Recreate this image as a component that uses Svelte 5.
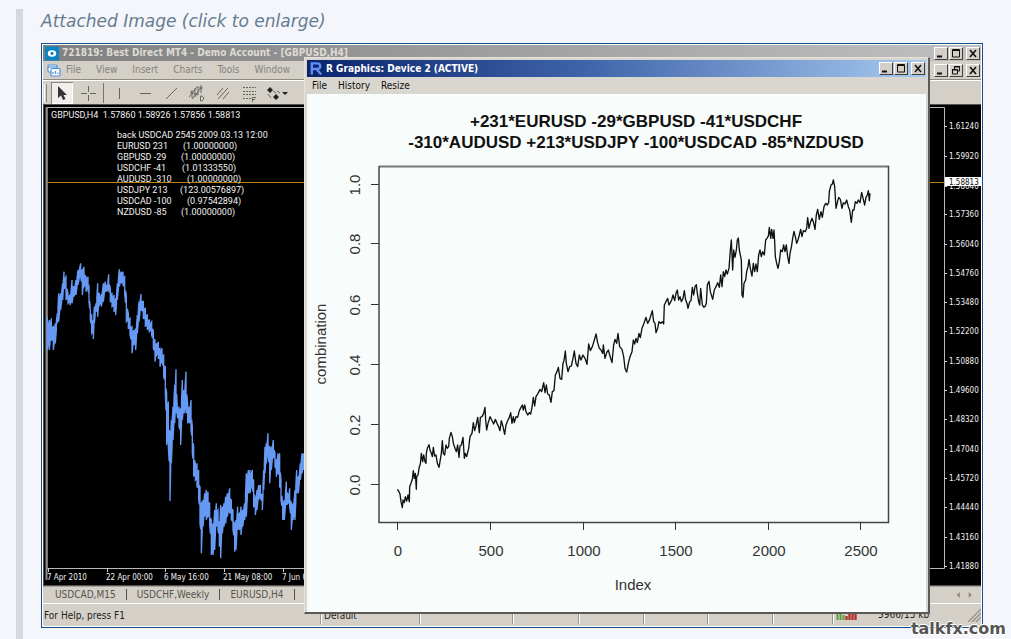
<script>
  const menus = ['File', 'View', 'Insert', 'Charts', 'Tools', 'Window', 'Help'];
  const rMenus = ['File', 'History', 'Resize'];
  const tabs = ['USDCAD,M15', 'USDCHF,Weekly', 'EURUSD,H4', 'GBPUSD,H4'];

  const comments = [
    ['back USDCAD 2545 2009.03.13 12:00', '', 0],
    ['EURUSD 231', '(1.00000000)', 183],
    ['GBPUSD -29', '(1.00000000)', 181],
    ['USDCHF -41', '(1.01333550)', 182],
    ['AUDUSD -310', '(1.00000000)', 187],
    ['USDJPY 213', '(123.00576897)', 180],
    ['USDCAD -100', '(0.97542894)', 187],
    ['NZDUSD -85', '(1.00000000)', 181]
  ];

  const prices = [
    ['1.61240', 126], ['1.59920', 156], ['1.58640', 186], ['1.57360', 214], ['1.56040', 244],
    ['1.54760', 273], ['1.53480', 302], ['1.52200', 331], ['1.50880', 361], ['1.49600', 390],
    ['1.48320', 419], ['1.47040', 449], ['1.45720', 478], ['1.44440', 507], ['1.43160', 537],
    ['1.41880', 566]
  ];

  const dates = [
    ['7 Apr 2010', 47], ['22 Apr 00:00', 106], ['6 May 16:00', 164],
    ['21 May 08:00', 223], ['7 Jun 00:00', 282]
  ];

  const xTicks = [[0, 398], [500, 491], [1000, 584], [1500, 676], [2000, 769], [2500, 861]];
  const yTicks = [['1.0', 185], ['0.8', 244], ['0.6', 305], ['0.4', 365], ['0.2', 425], ['0.0', 485]];

  // x:high:low in thirds of a pixel
  const ranges = `22:230:330 28:240:330 34:235:300 40:260:330 46:250:310 52:220:250 56:160:245 62:160:210
    68:130:180 72:95:140 78:110:180 84:160:190 90:165:195 96:120:190 102:140:170 108:120:165 114:90:135
    122:70:110 127:90:165 132:80:140 138:110:155 144:110:150 147:140:185 151:210:240 155:225:280 160:240:297
    163:200:250 168:190:215 173:130:230 178:160:195 184:165:200 190:130:185 196:125:155 201:135:155
    206:103:150 211:145:185 216:160:200 222:165:215 227:175:225 232:130:180 238:88:140 244:95:130 249:95:135
    254:110:160 259:165:245 265:220:265 270:235:285 276:260:340 282:270:315 287:265:330 292:225:280
    297:185:245 303:162:210 310:185:235 316:205:260 322:225:270 328:240:275 335:245:285 340:270:325
    345:300:365 350:310:345 355:305:355 360:325:380 366:325:365 371:345:410 376:380:460 380:460:615
    385:485:620 390:580:783 394:540:670 399:500:600 404:435:550 408:388:520 412:500:530 417:500:560
    422:505:615 427:420:540 432:450:520 438:395:520 443:490:550 448:500:550 453:480:570 457:560:640
    461:620:710 466:670:720 471:670:740 476:690:780 480:740:850 484:790:940 489:780:860 494:760:830
    499:750:840 504:755:830 509:790:855 514:840:945 519:850:945 524:810:930 529:790:860 534:810:870
    538:850:920 542:795:955 547:800:880 552:790:860 557:770:850 562:760:830 569:745:820 574:780:840
    579:810:870 584:850:935 588:840:930 593:800:870 598:820:870 603:800:885 608:810:860 614:790:840
    619:700:830 625:690:760 630:690:760 637:690:740 641:720:800 646:780:825 651:750:810 656:735:780
    661:735:770 667:770:810 671:690:750 675:620:700 679:610:670 684:580:640 689:620:730 694:620:690
    700:600:650 705:640:680 709:660:710 714:640:700 719:640:740 723:720:780 728:790:840 733:780:840
    739:725:795 744:770:790 749:745:800 754:790:870 759:790:840 765:750:840 770:690:760 775:710:760
    781:670:720 786:640:700 791:640:690`
    .trim()
    .split(/\s+/)
    .map((bar) => bar.split(':').map(Number));

  const bluePoints = ranges
    .flatMap(([x, hi, lo], i) => {
      const [nx, nhi, nlo] = ranges[i + 1] ?? ranges[i];
      const mx = (x + nx) / 2;
      const top = (hi + nhi) / 2;
      const low = (lo + nlo) / 2;
      const inset = (low - top) * 0.22;
      return [[x, hi], [x, lo], [mx, low - inset], [mx, top + inset]];
    })
    .map((p) => p.join(','))
    .join(' ');

  const comboStart = `52,508 57,515 60,522 63,545 67,563 69,540 73,548 76,530 80,543 84,525 88,545 89,500 93,490 97,478
    100,452 103,475 106,460 109,508 110,470 114,465 118,440 121,432 124,400 128,425 131,405 135,425 138,430
    139,400 142,385 147,374 150,390 154,400 157,410 160,382 164,408 168,405 172,430 177,442 180,425 184,400
    187,362 190,400 194,405 198,375 202,385 206,380 208,355 213,337 217,350 220,370 225,385 229,395 233,375
    237,412 240,378 244,375 249,352 253,415 256,400 260,410 266,385 270,350 276,340 280,308 284,332 288,318
    293,292 298,338 301,292 306,290 311,280 315,262 317,300 320,330 324,310 330,290 335,300 341,312 346,298
    351,310 356,320 360,332 364,302 369,320 374,343 378,315 384,300 388,292 392,278 396,310 400,290 403,308
    408,290 413,292 418,272 423,262 427,255 430,270 434,255 438,275 443,285 448,278 452,282 456,262 460,232
    464,258 468,230 474,220 480,208 485,215 491,188 495,218 499,195 503,222 508,225 513,247 517,215 522,212
    526,165 531,155 535,142 540,175 545,178 549,130 552,122 556,93 559,130 564,155 569,140 574,138 579,115
    583,93 588,130 593,140 598,105 603,120 609,105 615,115 621,133 626,72 631,92 637,80 643,60 648,42
    653,68 658,85 663,90 668,100 670,75 675,115 680,98 685,90 690,108 696,128 701,75 705,58 710,70 714,40
    719,80 726,88 731,110 735,145 740,157`;

  const comboEnd = `20,637 25,610 30,590 36,575 40,540 44,552 48,535 52,548 57,520 61,533 66,505 72,490 78,472 83,490
    89,478 93,465 97,452 101,485 105,490 108,518 113,505 117,485 122,490 127,485 131,492 133,435 138,425
    143,415 147,435 151,428 155,420 159,405 164,422 168,400 172,390 176,420 180,410 184,425 189,415 193,392
    197,420 201,430 204,445 209,425 213,422 217,382 221,405 225,380 229,374 232,400 236,425 239,435 242,385
    247,435 252,442 256,438 259,430 262,375 267,364 271,395 278,418 283,390 288,380 293,368 298,382 302,345
    306,380 310,335 314,350 318,330 322,342 327,325 331,270 334,240 338,330 341,270 345,292 349,270 352,240
    355,234 358,270 362,290 364,300 366,405 369,412 372,370 377,360 380,335 384,320 387,298 391,325 396,348
    400,310 404,335 408,312 412,335 416,285 420,270 424,290 428,275 433,285 437,240 441,235 445,228 448,202
    452,235 455,208 459,235 462,210 464,245 466,290 470,310 474,325 478,305 482,270 487,275 491,255 495,275
    499,255 503,290 507,310 510,280 514,262 518,235 522,214 526,230 530,250 534,240 538,225 542,208 546,230
    550,212 556,215 560,205 563,173 567,205 572,185 576,175 580,185 585,208 589,165 593,148 598,178 603,155
    607,172 612,140 617,130 622,135 626,128 628,95 633,75 637,72 640,60 644,80 648,145 652,128 656,112
    661,118 666,145 670,128 675,132 680,120 685,140 689,150 694,187 698,150 702,150 706,125 711,130 715,120
    720,128 725,97 730,118 734,135 738,112 742,105 745,92 748,122 750,100`;
</script>

{#snippet controls(kind)}
  <div class="controls">
    <button aria-label="Minimize"><svg viewBox="0 0 10 9"><path d="M1 7.500H6" stroke-width="2" /></svg></button>
    <button aria-label={kind === 'restore' ? 'Restore' : 'Maximize'}>
      {#if kind === 'restore'}
        <svg viewBox="0 0 10 9"><path d="M3.500 3V.5H8.500V5H6.500M3 1H9M1.500 3.500H6.500V8H1.500ZM1 4H7" /></svg>
      {:else}
        <svg viewBox="0 0 10 9"><path d="M1.500 .5H8.500V8H1.500ZM1 1.500H9" /></svg>
      {/if}
    </button>
    <button class="close" aria-label="Close"><svg viewBox="0 0 10 9"><path d="M2 1L8 8M8 1L2 8" stroke-width="1.600" /></svg></button>
  </div>
{/snippet}

<main>
  <figure>
    <figcaption>Attached Image (click to enlarge)</figcaption>
    <div class="frame">
      <section class="terminal">
        <header class="title">
          <svg class="app" viewBox="0 0 15 15">
            <rect width="15" height="15" fill="#0b84c4" />
            <ellipse cx="7.500" cy="7.500" rx="4.500" ry="3.500" fill="#fff" />
            <circle cx="7.500" cy="7.500" r="1.500" fill="#0b6fae" />
          </svg>
          <h1>721819: Best Direct MT4 - Demo Account - [GBPUSD,H4]</h1>
          {@render controls('max')}
        </header>
        <nav class="menu">
          <svg class="doc" viewBox="0 0 14 13" fill="#fff" stroke="#4f8fe0" stroke-width="1.200">
            <rect x="1" y="1" width="9" height="7" rx="1" /><path d="M1 3H10" />
            <rect x="4" y="4.500" width="9" height="7.500" rx="1" /><path d="M6 10V8M8.500 10V7M11 10V8.500" />
          </svg>
          {#each menus as m}<button>{m}</button>{/each}
          {@render controls('restore')}
        </nav>
        <div class="tools">
          <span class="handle"></span>
          <button class="on" aria-label="Cursor"><svg viewBox="0 0 18 18"><path d="M5 2V14L8 11.500L10 16L12.500 15L10.500 11H14Z" fill="#333" stroke="none" /></svg></button>
          <button aria-label="Crosshair"><svg viewBox="0 0 18 18"><path d="M9.500 2V8M9.500 11V17M2 9.500H8M11 9.500H17" /></svg></button>
          <span class="sep"></span>
          <button aria-label="Vertical line"><svg viewBox="0 0 18 18"><path d="M9.500 4V15" /></svg></button>
          <button aria-label="Horizontal line"><svg viewBox="0 0 18 18"><path d="M4 9.500H15" /></svg></button>
          <button aria-label="Trendline"><svg viewBox="0 0 18 18"><path d="M4 15L15 4" /></svg></button>
          <button aria-label="Equidistant channel"><svg viewBox="0 0 18 18"><path d="M1 13L9 3M4 15L14 3M2 8L10 11M4 6V14M7 4V13M10 2V11M13 1V9M11 4H15" /><path d="M12.500 12V17H14L15.500 15.500V13.500L14 12Z" /></svg></button>
          <button aria-label="Channel"><svg viewBox="0 0 18 18"><path d="M3 11L9 4M4 15L14 4M9 15L15 8" /></svg></button>
          <button aria-label="Fibonacci"><svg viewBox="0 0 18 18"><path d="M3 3.500H16M3 7.500H16M3 10.500H16M3 14.500H11" stroke-dasharray="2 1" /><path d="M12.500 18V13.500H16M12 15.500H15" /></svg></button>
          <button aria-label="Arrows"><svg class="wide" viewBox="0 0 24 18"><path d="M3 6L6 3L9 6L6 9ZM9 13L12 10L15 13L12 16ZM18 8H24L21 11Z" fill="#222" stroke="none" /><path d="M4 10L7 14M9 7L12 9M13 7L16 9" /></svg></button>
        </div>

        <svg class="chart" viewBox="43 104 938 481">
          <rect x="43" y="104" width="938" height="481" fill="#000" />
          <path d="M43.500 585V104.500H981" stroke="#55554f" fill="none" />
          <path d="M47 568V107.500H944.500V568.500H47" stroke="#b8b8b8" fill="none" />
          <path d="M46.500 107V580" stroke="#8c8c86" stroke-width="2" />
          <path d="M47 182.500H944" stroke="#b8801c" />
          <g class="notes">
            <text x="51" y="118" xml:space="preserve">GBPUSD,H4  1.57860 1.58926 1.57856 1.58813</text>
            {#each comments as [label, value, x], i}
              <text x="117" y={138 + i * 11}>{label}</text>
              {#if value}<text {x} y={138 + i * 11}>{value}</text>{/if}
            {/each}
          </g>
          <g class="axis">
            {#each prices as [p, y]}
              <path d="M944 {y}.5h3" stroke="#ccc" />
              <text x="949" y={y + 3}>{p}</text>
            {/each}
            <rect x="945" y="177" width="36" height="9" fill="#fff" />
            <text class="dark" x="949" y="185">1.58813</text>
            {#each dates as [d, x]}
              <path d="M{x + 1}.5 568v4" stroke="#ccc" />
              <text {x} y="580">{d}</text>
            {/each}
          </g>
          <g transform="translate(40 240) scale(.33333)">
            <polyline points={bluePoints} fill="none" stroke="#6699f4" stroke-width="4" />
          </g>
        </svg>

        <nav class="tabs">
          {#each tabs as t}<button>{t}</button>{/each}
          <svg viewBox="0 0 24 8"><path d="M5 0V8L1 4ZM17 0V8L21 4Z" fill="#8a8680" /></svg>
        </nav>
        <footer class="status">
          <span>For Help, press F1</span>
          <span>Default</span>
          <span></span><span></span><span></span><span></span><span></span><span></span>
          <span class="net">
            <svg class="signal" viewBox="0 0 22 9">
              <path d="M1.500 9V1M4.500 9V2M7.500 9V4" stroke="#5f9a3c" stroke-width="2" />
              <path d="M10.500 9V5M13.500 9V3M16.500 9V2M19.500 9V1" stroke="#b5342c" stroke-width="2.400" />
            </svg>
            5966/13 kb
            <svg class="grip" viewBox="0 0 13 13"><path d="M0 13L13 0M4 13L13 4M8 13L13 8" stroke="#8a8680" stroke-width="1.200" /></svg>
          </span>
        </footer>
      </section>

      <section class="device">
        <header class="title">
          <svg class="app" viewBox="0 0 15 15"><path d="M3 14V2H9Q12 2 12 5Q12 8 9 8H4M8 8L13 14" fill="none" stroke="#5f8df5" stroke-width="2.600" /></svg>
          <h2>R Graphics: Device 2 (ACTIVE)</h2>
          {@render controls('max')}
        </header>
        <nav class="menu">
          {#each rMenus as m}<button>{m}</button>{/each}
        </nav>
        <svg class="plot" viewBox="307 94 619 518">
          <g class="heading">
            <text x="636" y="127">+231*EURUSD -29*GBPUSD -41*USDCHF</text>
            <text x="636" y="148">-310*AUDUSD +213*USDJPY -100*USDCAD -85*NZDUSD</text>
          </g>
          <path d="M379 166.500H889" stroke="#777" stroke-width="2" />
          <path d="M379 166V522.500H888.500V166" stroke="#444" stroke-width="1.500" fill="none" />
          <g class="labels">
            {#each xTicks as [label, x]}
              <path d="M{x - 0.5} 522v8" stroke="#333" />
              <text x={x} y="556">{label}</text>
            {/each}
            {#each yTicks as [label, y]}
              <path d="M371 {y - 0.5}h8" stroke="#333" />
              <text transform="translate(360 {y}) rotate(-90)">{label}</text>
            {/each}
            <text x="633" y="590">Index</text>
            <text transform="translate(326 344) rotate(-90)">combination</text>
          </g>
          <g fill="none" stroke="#111" stroke-width="4" stroke-linejoin="round">
            <polyline points={comboStart} transform="translate(380 320) scale(.33333)" />
            <polyline points={comboEnd} transform="translate(620 160) scale(.33333)" />
          </g>
        </svg>
      </section>
    </div>
    <span class="mark">talkfx.com</span>
  </figure>
</main>

<style>
  :global(body) {
    margin: 0;
    background: #f4f6fb;
  }
  main {
    padding: 9px 0 0 16px;
  }
  figure {
    position: relative;
    margin: 0;
    padding: 0 28px 11px 18px;
    border-left: 7px solid #d3d8e1;
  }
  figcaption {
    height: 34px;
    font: italic 17px/24px Verdana, 'DejaVu Sans', sans-serif;
    color: #667c90;
  }
  .frame {
    position: relative;
    padding: 1px;
    border: 1px solid #14508f;
    background: #fff;
    font: 10px/12px 'DejaVu Sans Condensed', 'DejaVu Sans', sans-serif;
    color: #222;
  }
  svg {
    display: block;
  }
  button {
    font: inherit;
    color: inherit;
    background: none;
    border: 0;
    padding: 0;
    white-space: nowrap;
  }
  .terminal {
    background: #d4d0c8;
    overflow: hidden;
  }
  .title {
    display: flex;
    align-items: center;
    gap: 3px;
    height: 16px;
    padding: 0 1px 0 2px;
    background: linear-gradient(90deg, #808080, #c0c0c0);
    color: #dedbd4;
  }
  h1,
  h2 {
    margin: 0;
    font: bold 10px/14px 'DejaVu Sans Condensed', 'DejaVu Sans', sans-serif;
    white-space: nowrap;
  }
  .app {
    width: 14px;
    height: 15px;
  }
  .controls {
    display: flex;
    gap: 1px;
    margin-left: auto;
  }
  .controls button {
    display: grid;
    place-items: center;
    width: 14px;
    height: 13px;
    background: #d4d0c8;
    border: 1px solid;
    border-color: #fff #404040 #404040 #fff;
    box-sizing: border-box;
  }
  .controls .close {
    margin-left: 2px;
  }
  .controls svg {
    width: 10px;
    height: 9px;
    fill: none;
    stroke: #111;
  }
  .menu {
    display: flex;
    align-items: center;
    gap: 15px;
    height: 18px;
    padding: 0 1px 0 5px;
  }
  .terminal .menu {
    padding-left: 4px;
    color: #85827c;
    border-bottom: 1px solid #8e8b85;
  }
  .doc {
    width: 14px;
    height: 13px;
    margin-right: -10px;
  }
  .tools {
    display: flex;
    align-items: center;
    gap: 4px;
    height: 23px;
    padding: 0 1px;
    border-top: 1px solid #fff;
  }
  .tools button {
    display: grid;
    place-items: center;
    width: 22px;
    height: 22px;
  }
  .tools .on {
    background: #f1efeb;
    box-shadow: inset 1px 1px #8a8780, inset -1px -1px #fff;
  }
  .tools svg {
    width: 18px;
    height: 18px;
    fill: none;
    stroke: #66645f;
  }
  .tools .wide {
    width: 24px;
  }
  .handle {
    width: 1px;
    height: 18px;
    border-left: 1px solid #fff;
    border-right: 1px solid #8a8780;
  }
  .sep {
    width: 1px;
    height: 20px;
    background: #77746e;
  }
  .chart,
  .plot {
    width: 100%;
    height: auto;
  }
  .notes {
    font: 9px Roboto, sans-serif;
    fill: #f2f2f2;
  }
  .axis {
    font-size: 8px;
    fill: #f2f2f2;
  }
  .dark {
    fill: #111;
  }
  .tabs {
    display: flex;
    align-items: center;
    height: 17px;
    padding-left: 2px;
    border-top: 1px solid #55524d;
    border-bottom: 1px solid #fff;
    box-shadow: inset 0 1px #a5a29b;
    color: #55534f;
  }
  .tabs button {
    padding: 0 10px;
    border-right: 1px solid #55534f;
    line-height: 11px;
  }
  .tabs svg {
    width: 24px;
    height: 6px;
    margin-left: auto;
    margin-right: 4px;
  }
  .status {
    display: grid;
    grid-template-columns: 278fr 99fr 93fr 66fr 65fr 64fr 65fr 60fr 148fr;
    align-items: center;
    height: 22px;
  }
  .status span {
    height: 18px;
    padding-left: 3px;
    line-height: 20px;
    border-right: 1px solid #98958e;
    box-shadow: 1px 0 #fff;
    white-space: nowrap;
  }
  .status span:first-child {
    padding-left: 1px;
  }
  .status .net {
    display: flex;
    align-items: center;
    gap: 20px;
    border: 0;
    box-shadow: none;
  }
  .signal {
    width: 22px;
    height: 9px;
  }
  .grip {
    width: 13px;
    height: 13px;
    margin-left: auto;
  }
  .device {
    position: absolute;
    top: 13px;
    left: 262px;
    right: 52px;
    padding: 2px 2px 0;
    border: 1px solid #e6e3dc;
    border-right: 2px solid #5c5a56;
    border-bottom: 2px solid #5c5a56;
    background: #d9d6cf;
  }
  .device .title {
    height: 17px;
    background: linear-gradient(90deg, #0a246a, #3f64aa 45%, #a6caf0);
    color: #fff;
  }
  .device .menu {
    gap: 11px;
    height: 17px;
    color: #111;
  }
  .plot {
    background: #f8fcfa;
  }
  .heading,
  .labels {
    font-family: 'Liberation Sans', Arial, sans-serif;
    text-anchor: middle;
    fill: #111;
  }
  .heading {
    font-size: 17px;
    font-weight: bold;
  }
  .labels {
    font-size: 15px;
    fill: #333;
  }
  .mark {
    position: absolute;
    right: 5px;
    bottom: 1px;
    font: bold 16px/18px 'DejaVu Sans', Verdana, sans-serif;
    color: #555;
    text-shadow: 1px 0 #fff, -1px 0 #fff, 0 1px #fff, 0 -1px #fff;
  }
</style>
